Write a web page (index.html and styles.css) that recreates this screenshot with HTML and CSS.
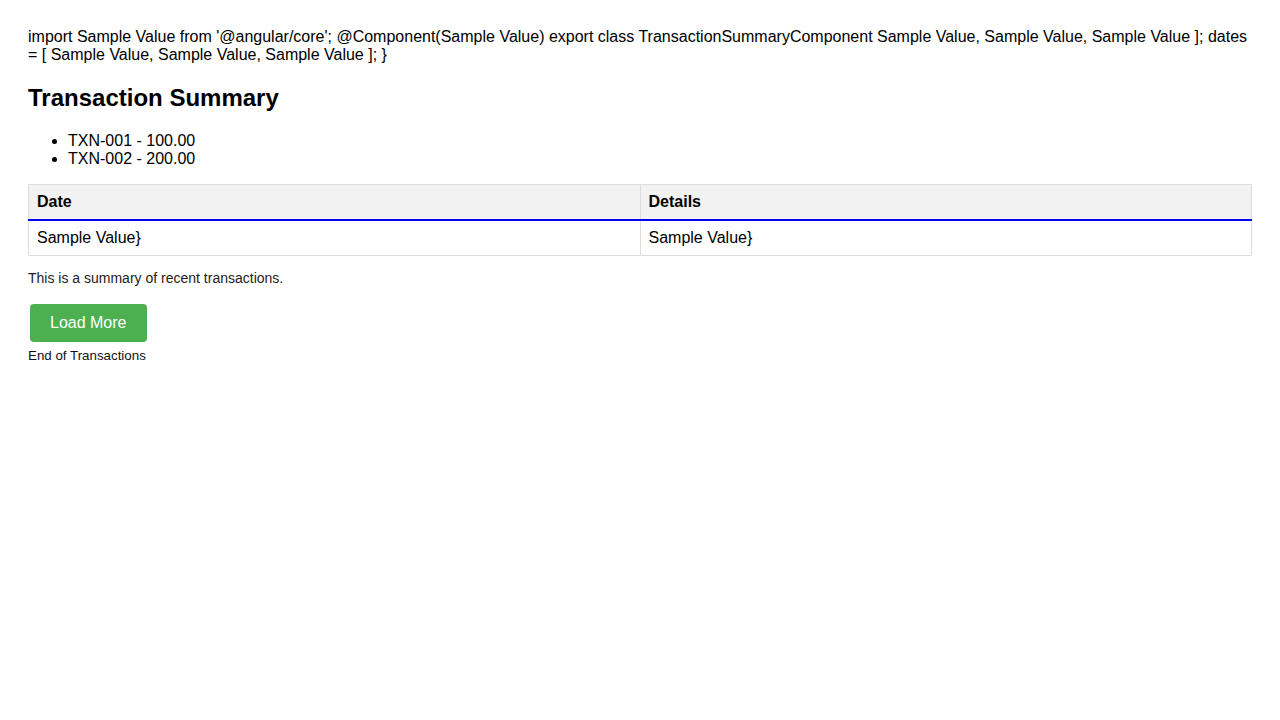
FILE: index.html
```html
<!DOCTYPE html>
<html lang="en">
<head>
<meta charset="utf-8">
<title>Transaction Summary</title>
<link rel="stylesheet" href="styles.css">
</head>
<body>
<div class="page">
  <p class="code">import Sample Value from '@angular/core'; @Component(Sample Value) export class TransactionSummaryComponent Sample Value, Sample Value, Sample Value ]; dates = [ Sample Value, Sample Value, Sample Value ]; }</p>
  <h2 class="title">Transaction Summary</h2>
  <ul class="txn-list">
    <li>TXN-001 - 100.00</li>
    <li>TXN-002 - 200.00</li>
  </ul>
  <table class="txn-table">
    <thead>
      <tr><th>Date</th><th>Details</th></tr>
    </thead>
    <tbody>
      <tr><td>Sample Value}</td><td>Sample Value}</td></tr>
    </tbody>
  </table>
  <p class="summary">This is a summary of recent transactions.</p>
  <div class="actions">
    <button class="load-btn" type="button">Load More</button>
  </div>
  <div class="end-note">End of Transactions</div>
</div>
</body>
</html>
```

FILE: styles.css
```css
html, body {
  margin: 0;
  padding: 0;
  background: #fff;
}
body {
  font-family: "Liberation Sans", Arial, sans-serif;
  font-size: 16px;
  color: #000;
}
.page {
  padding: 28px;
}
.code {
  margin: 0;
  line-height: 18px;
}
.title {
  font-size: 24px;
  font-weight: bold;
  margin: 20px 0;
  line-height: 28px;
}
.txn-list {
  margin: 0 0 16px;
  padding-left: 40px;
  line-height: 18px;
}
.txn-table {
  width: 100%;
  border-collapse: collapse;
  border: 1px solid #ddd;
}
.txn-table th,
.txn-table td {
  border: 1px solid #ddd;
  padding: 8px;
  text-align: left;
  line-height: 18px;
}
.txn-table th {
  background: #f2f2f2;
  font-weight: bold;
  border-bottom: 2px solid #0000ee;
}
.summary {
  font-size: 14px;
  line-height: 16px;
  margin: 14px 0 14px;
  color: #222;
}
.actions {
  display: flex;
}
.load-btn {
  margin: 4px 2px;
  padding: 10px 20px;
  background: #4caf50;
  color: #fff;
  border: none;
  border-radius: 4px;
  font-family: "Liberation Sans", Arial, sans-serif;
  font-size: 16px;
  line-height: 18px;
  cursor: pointer;
}
.end-note {
  font-size: 13.33px;
  line-height: 15px;
  margin-top: 2px;
  color: #111;
}
```
